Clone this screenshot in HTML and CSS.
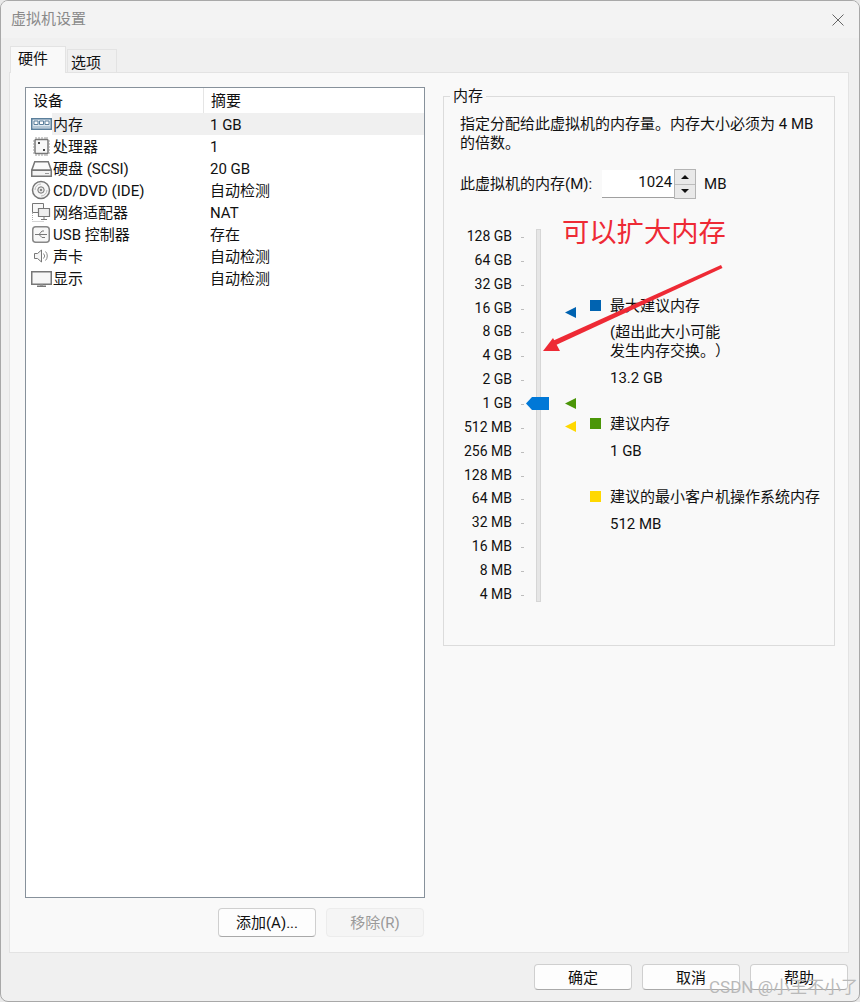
FILE: index.html
```html
<!DOCTYPE html>
<html lang="zh-CN">
<head>
<meta charset="utf-8">
<title>虚拟机设置</title>
<link rel="stylesheet" href="styles.css">
</head>
<body>
<div class="window">
  <header class="titlebar">
    <span class="title">虚拟机设置</span>
    <svg class="close" width="12" height="12" viewBox="0 0 12 12"><path d="M.5.5l11 11M11.500.5l-11 11" stroke="#666" stroke-width="1" fill="none"/></svg>
  </header>
  <nav class="tabs">
    <span class="tab active">硬件</span>
    <span class="tab">选项</span>
  </nav>
  <main class="panel">
    <section class="left">
      <div class="list">
        <div class="list-head"><span class="col-a">设备</span><span class="col-b">摘要</span></div>
        <div class="row selected">
          <svg class="ico" viewBox="0 0 21 22"><path d="M.75 5.750h19.500v10.500H.75z" fill="#dfe9f1" stroke="#5b7f9b" stroke-width="1.500"/><path d="M3 8h4v3.500H3zM8.500 8h4v3.500h-4zM14 8h4v3.500h-4z" fill="#fff" stroke="#5b7f9b"/><path d="M2 14h17" stroke="#8ba6ba"/></svg>
          <div class="cells"><span class="name">内存</span><span class="val">1 GB</span></div>
        </div>
        <div class="row">
          <svg class="ico" viewBox="0 0 21 22"><rect x="4" y="4.500" width="13" height="14" rx="1" fill="#f7f7f7" stroke="#777" stroke-width="1.500"/><path d="M5 2v2M8 2v2M11 2v2M14 2v2M16 2v2M5 19v2M8 19v2M11 19v2M14 19v2M16 19v2M2 6h2M2 9h2M2 12h2M2 15h2M2 18h2M17 6h2M17 9h2M17 12h2M17 15h2M17 18h2" stroke="#999"/><path d="M7 7h2v2H7zM12 14h2v2h-2z" fill="#444"/></svg>
          <div class="cells"><span class="name">处理器</span><span class="val">1</span></div>
        </div>
        <div class="row">
          <svg class="ico" viewBox="0 0 21 22"><path d="M3.750 4.750h13.500l3 8.500H.75z" fill="#fafafa" stroke="#777" stroke-width="1.500"/><path d="M.75 13.250h19.500v6H.75z" fill="#f4f4f4" stroke="#777" stroke-width="1.500"/><path d="M14 16.500h4" stroke="#999"/></svg>
          <div class="cells"><span class="name">硬盘 (SCSI)</span><span class="val">20 GB</span></div>
        </div>
        <div class="row">
          <svg class="ico" viewBox="0 0 21 22"><circle cx="10" cy="11" r="8.500" fill="#f6f6f6" stroke="#777" stroke-width="1.500"/><circle cx="10" cy="11" r="3.200" fill="#e4e4e4" stroke="#777"/><circle cx="10" cy="11" r="1" fill="#666"/><path d="M4 11a6 6 0 0 1 6-6M16 11a6 6 0 0 1-6 6" stroke="#bbb" fill="none"/></svg>
          <div class="cells"><span class="name">CD/DVD (IDE)</span><span class="val">自动检测</span></div>
        </div>
        <div class="row">
          <svg class="ico" viewBox="0 0 21 22"><path d="M1.500 2.500h11v9h-11z" fill="#f7f7f7" stroke="#777"/><path d="M7.500 7.500h11v8h-11z" fill="#eee" stroke="#777" stroke-width="1.200"/><path d="M13 15.500v3M10 18.500h6" stroke="#777" fill="none"/><path d="M1.500 12v8M1.500 20.500h12" stroke="#aaa" stroke-dasharray="1 1" fill="none"/></svg>
          <div class="cells"><span class="name">网络适配器</span><span class="val">NAT</span></div>
        </div>
        <div class="row">
          <svg class="ico" viewBox="0 0 21 22"><rect x="1.750" y="3.750" width="16.500" height="15.500" rx="3" fill="#f7f7f7" stroke="#888" stroke-width="1.500"/><path d="M4 11.500h12M11 8l-3 3.500 3 3h3M11 8h2" stroke="#777" fill="none"/></svg>
          <div class="cells"><span class="name">USB 控制器</span><span class="val">存在</span></div>
        </div>
        <div class="row">
          <svg class="ico" viewBox="0 0 21 22"><path d="M3.500 8.500h3l4-3.500v12l-4-3.500h-3z" fill="#f5f5f5" stroke="#777"/><path d="M12.500 8.500a3.500 3.500 0 0 1 0 5M14.500 6.500a6.500 6.500 0 0 1 0 9" stroke="#888" fill="none"/></svg>
          <div class="cells"><span class="name">声卡</span><span class="val">自动检测</span></div>
        </div>
        <div class="row">
          <svg class="ico" viewBox="0 0 21 22"><path d="M.75 4.750h19.500v12.500H.75z" fill="#f6f6f6" stroke="#777" stroke-width="1.500"/><path d="M6 19.250h9" stroke="#777" stroke-width="1.500"/><path d="M9 17.500h3v1.500H9z" fill="#999"/></svg>
          <div class="cells"><span class="name">显示</span><span class="val">自动检测</span></div>
        </div>
      </div>
      <div class="list-actions">
        <button class="btn tall">添加(A)...</button>
        <button class="btn tall disabled">移除(R)</button>
      </div>
    </section>
    <fieldset class="group">
      <legend>内存</legend>
      <p class="intro">指定分配给此虚拟机的内存量<span class="stop">。</span>内存大小必须为 4 MB 的倍数<span class="stop">。</span></p>
      <div class="spin-row">
        <span>此虚拟机的内存(M):</span>
        <span class="spin-input">1024</span>
        <span class="spin-btns">
          <span class="spin-btn"><i class="up"></i></span>
          <span class="spin-btn"><i class="down"></i></span>
        </span>
        <span class="unit">MB</span>
      </div>
      <div class="slider-area">
        <div class="scale">
          <div class="mark">128 GB</div><div class="mark">64 GB</div><div class="mark">32 GB</div><div class="mark">16 GB</div>
          <div class="mark">8 GB</div><div class="mark">4 GB</div><div class="mark">2 GB</div><div class="mark">1 GB</div>
          <div class="mark">512 MB</div><div class="mark">256 MB</div><div class="mark">128 MB</div><div class="mark">64 MB</div>
          <div class="mark">32 MB</div><div class="mark">16 MB</div><div class="mark">8 MB</div><div class="mark">4 MB</div>
        </div>
        <div class="track">
          <svg class="thumb" width="23" height="13" viewBox="0 0 23 13"><path d="M0 6.500L6 0h17v13H6z" fill="#0078d7"/></svg>
        </div>
        <div class="pointers">
          <svg class="ptr ptr-max" width="11" height="11" viewBox="0 0 11 11"><path d="M0 5.500L11 0v11z" fill="#0063b1"/></svg>
          <svg class="ptr ptr-rec" width="11" height="11" viewBox="0 0 11 11"><path d="M0 5.500L11 0v11z" fill="#4b9608"/></svg>
          <svg class="ptr ptr-min" width="11" height="11" viewBox="0 0 11 11"><path d="M0 5.500L11 0v11z" fill="#ffd800"/></svg>
        </div>
        <div class="legend">
          <div class="item first"><i class="sq blue"></i><span>最大建议内存</span></div>
          <div class="note">(超出此大小可能<br>发生内存交换<span class="stop">。</span>）</div>
          <div class="amount">13.2 GB</div>
          <div class="item"><i class="sq green"></i><span>建议内存</span></div>
          <div class="amount">1 GB</div>
          <div class="item"><i class="sq yellow"></i><span>建议的最小客户机操作系统内存</span></div>
          <div class="amount">512 MB</div>
        </div>
      </div>
    </fieldset>
  </main>
  <footer class="footer">
    <button class="btn">确定</button>
    <button class="btn">取消</button>
    <button class="btn">帮助</button>
  </footer>
  <div class="note-text">可以扩大内存</div>
  <svg class="arrow" width="860" height="1002" viewBox="0 0 860 1002"><path d="M721 265L722.500 268L556 345L553.500 340.500z" fill="#ee2a35"/><path d="M543 351L553 338L560 351z" fill="#ee2a35"/></svg>
  <div class="watermark">CSDN @小王不小了</div>
</div>
</body>
</html>
```
FILE: styles.css
```css
* { box-sizing: border-box; }
html, body { margin: 0; padding: 0; }
body {
  width: 860px;
  height: 1002px;
  overflow: hidden;
  background: #e9e9e9;
  font: 15px/19px Roboto, "Noto Sans CJK SC", sans-serif;
  text-spacing-trim: space-all;
  color: #111;
}
.stop { font-family: "Noto Sans CJK TC", sans-serif; line-height: 0; }
.window {
  position: relative;
  width: 860px;
  height: 1002px;
  display: flex;
  flex-direction: column;
  background: #f0f0f0;
  border: 1px solid #a8a8a8;
  border-radius: 8px;
  overflow: hidden;
}
.titlebar {
  height: 37px;
  flex: none;
  display: flex;
  align-items: center;
  justify-content: space-between;
  padding: 0 15px 0 10px;
  background: #f3f3f3;
}
.title { color: #8a8a8a; }
.tabs {
  height: 34px;
  flex: none;
  display: flex;
  align-items: flex-end;
  padding-left: 9px;
}
.tab {
  width: 50px;
  height: 23px;
  margin-left: 1px;
  padding: 1px 0 0 3px;
  line-height: 24px;
  background: #f0f0f0;
  border: 1px solid #e3e3e3;
  border-bottom: 0;
}
.tab.active {
  position: relative;
  width: 56px;
  height: 27px;
  margin: 0 0 -1px;
  padding: 1px 0 0 7px;
  line-height: 23px;
  background: #f9f9f9;
  border-bottom: 0;
  z-index: 1;
}
.panel {
  height: 881px;
  flex: none;
  width: 840px;
  margin-left: 8px;
  display: flex;
  padding: 14px 0 0 15px;
  background: #f9f9f9;
  border: 1px solid #e3e3e3;
}
.left { width: 400px; flex: none; }
.list {
  height: 811px;
  background: #fff;
  border: 1px solid #87919b;
}
.list-head {
  height: 25px;
  display: flex;
  align-items: center;
}
.col-a {
  width: 178px;
  height: 100%;
  padding: 4px 0 0 7px;
  flex: none;
  border-right: 1px solid #e5e5e5;
}
.col-b { padding: 2px 0 0 7px; }
.row { height: 22px; display: flex; align-items: center; padding-left: 5px; }
.ico { width: 21px; height: 22px; flex: none; }
.cells { flex: 1; height: 22px; display: flex; align-items: center; padding: 2px 0 0 1px; }
.selected .cells { background: #f0f0f0; }
.name { width: 157px; flex: none; }
.list-actions {
  display: flex;
  justify-content: flex-end;
  gap: 10px;
  margin-top: 10px;
  padding-right: 1px;
}
.btn {
  width: 98px;
  height: 26px;
  padding: 2px 0 0;
  font: inherit;
  color: #111;
  background: #fdfdfd;
  border: 1px solid #cfcfcf;
  border-bottom-color: #a9a9a9;
  border-radius: 4px;
}
.btn.tall { height: 29px; }
.btn.disabled {
  color: #9a9a9a;
  background: #f5f5f5;
  border-color: #ececec;
}
.group {
  width: 392px;
  height: 559px;
  margin: 0 0 0 18px;
  padding: 0 16px;
  flex: none;
  border: 1px solid #dcdcdc;
  min-width: 0;
}
.group legend { padding: 0 3px; margin-left: -10px; line-height: 19px; }
.intro { margin: 9px 0 0; width: 360px; }
.spin-row {
  display: flex;
  align-items: center;
  height: 30px;
  margin-top: 16px;
}
.spin-input {
  width: 72px;
  height: 28px;
  margin-left: 10px;
  padding: 1px 2px 0 0;
  text-align: right;
  line-height: 22px;
  background: #fff;
  border-bottom: 1px solid #a0a0a0;
}
.spin-btns {
  width: 22px;
  height: 30px;
  display: flex;
  flex-direction: column;
  gap: 1px;
  background: #bcbcbc;
  border: 1px solid #b4b4b4;
}
.spin-btn { flex: 1; display: flex; align-items: center; justify-content: center; background: #e9e9e9; }
.spin-btn i { width: 0; height: 0; border-left: 4px solid transparent; border-right: 4px solid transparent; }
.spin-btn .up { border-bottom: 4px solid #111; }
.spin-btn .down { border-top: 4px solid #111; }
.unit { margin-left: 8px; }
.slider-area { display: flex; margin-top: 26px; }
.scale { width: 64px; flex: none; }
.mark {
  position: relative;
  height: 23.87px;
  font-size: 14px;
  line-height: 23.87px;
  padding-right: 12px;
  text-align: right;
  white-space: nowrap;
}
.mark::after {
  content: "";
  position: absolute;
  right: 0;
  top: 12px;
  width: 3px;
  height: 1px;
  background: #bdbdbd;
}
.track {
  position: relative;
  width: 5px;
  height: 373px;
  margin: 4px 0 0 12px;
  flex: none;
  background: #e6e6e6;
  border: 1px solid #d6d6d6;
}
.thumb { position: absolute; left: -11px; top: 167px; }
.pointers { position: relative; width: 11px; margin: 0 14px 0 24px; flex: none; }
.ptr { position: absolute; left: 0; }
.ptr-max { top: 82px; }
.ptr-rec { top: 173px; }
.ptr-min { top: 196px; }
.legend { flex: 1; white-space: nowrap; }
.item { display: flex; align-items: flex-start; margin-top: 27px; }
.item.first { margin-top: 72px; }
.sq { width: 11px; height: 11px; flex: none; margin: 3px 9px 0 0; }
.sq.blue { background: #0063b1; }
.sq.green { background: #4b9608; }
.sq.yellow { background: #ffd800; }
.note { margin: 7px 0 0 20px; }
.amount { margin: 8px 0 0 20px; }
.footer {
  flex: 1;
  display: flex;
  justify-content: flex-end;
  gap: 10px;
  padding: 11px 11px 0 0;
}
.note-text {
  position: absolute;
  left: 561px;
  top: 213px;
  font-size: 27.300px;
  line-height: 38px;
  white-space: nowrap;
  color: #ee2a35;
}
.arrow { position: absolute; left: -1px; top: -1px; pointer-events: none; }
.watermark {
  position: absolute;
  left: 708px;
  top: 975px;
  font-size: 17px;
  line-height: 22px;
  color: #b9b9b9;
  white-space: nowrap;
}
```
